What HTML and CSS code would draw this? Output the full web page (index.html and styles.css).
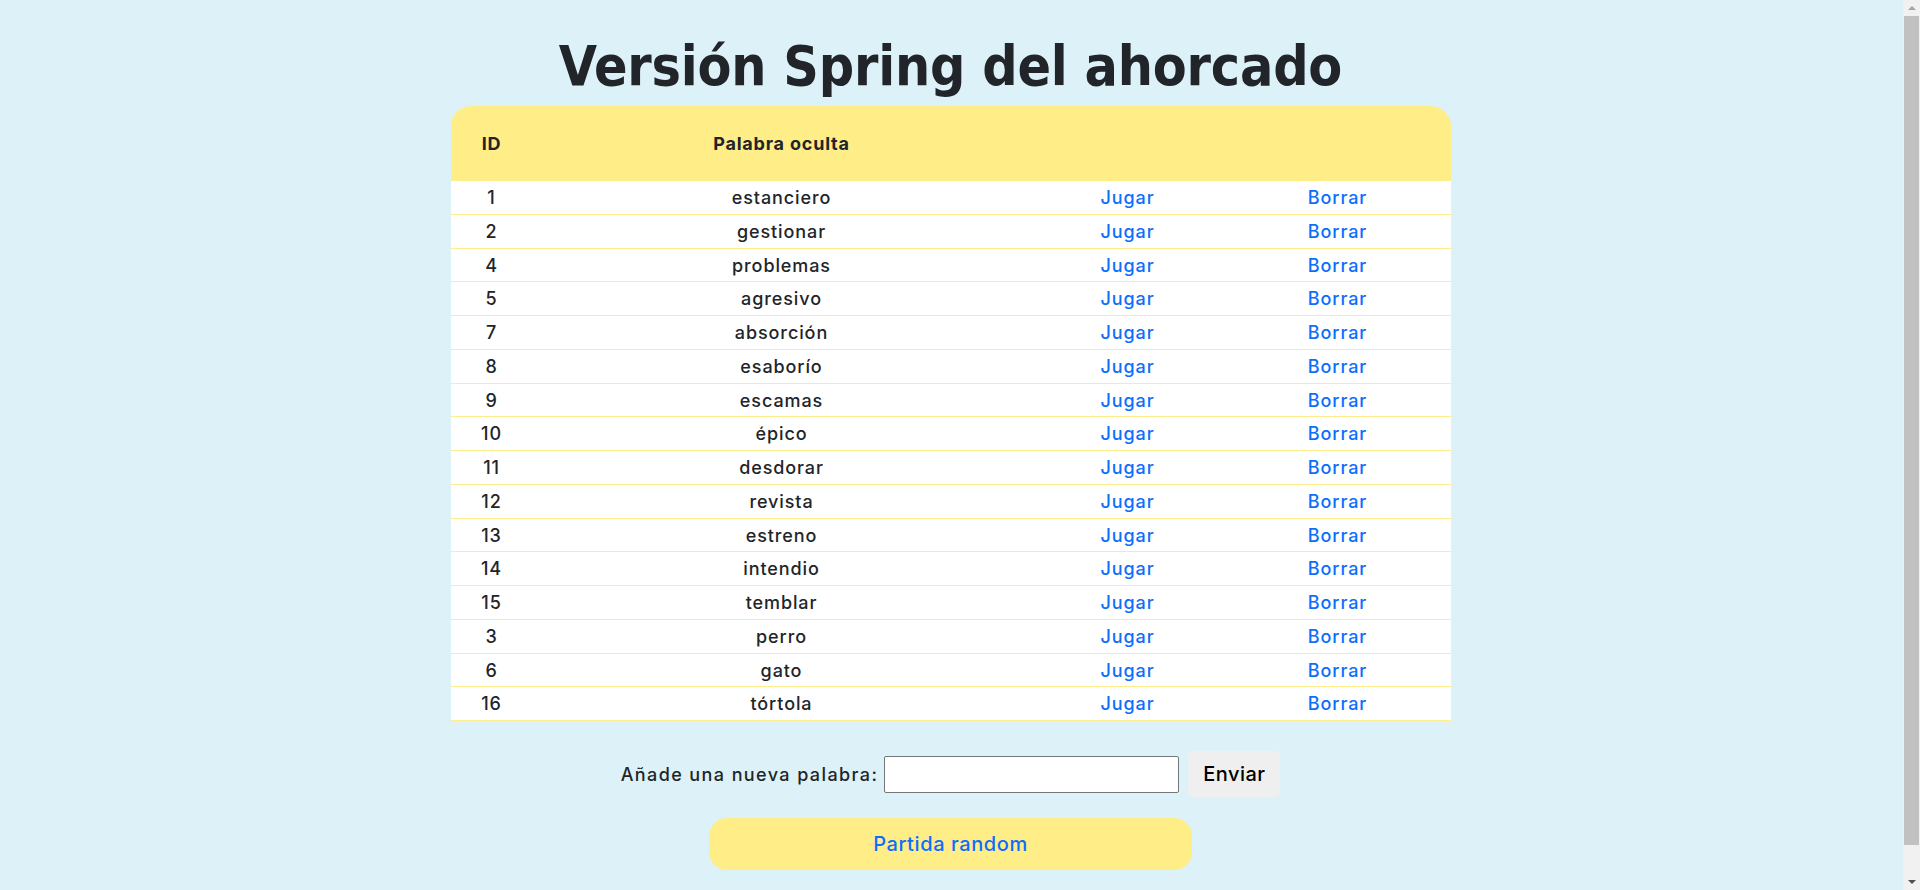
FILE: index.html
```html
<!DOCTYPE html>
<html lang="es">
<head>
<meta charset="utf-8">
<title>Ahorcado</title>
<link rel="stylesheet" href="styles.css">
</head>
<body>
<main class="page">
  <h1 class="title">Versión Spring del ahorcado</h1>
  <table class="words">
    <colgroup>
      <col class="c-id"><col class="c-word"><col class="c-play"><col class="c-del">
    </colgroup>
    <thead>
      <tr><th>ID</th><th>Palabra oculta</th><th></th><th></th></tr>
    </thead>
    <tbody>
      <tr><td>1</td><td>estanciero</td><td><a href="#">Jugar</a></td><td><a href="#">Borrar</a></td></tr>
      <tr><td>2</td><td>gestionar</td><td><a href="#">Jugar</a></td><td><a href="#">Borrar</a></td></tr>
      <tr><td>4</td><td>problemas</td><td><a href="#">Jugar</a></td><td><a href="#">Borrar</a></td></tr>
      <tr><td>5</td><td>agresivo</td><td><a href="#">Jugar</a></td><td><a href="#">Borrar</a></td></tr>
      <tr><td>7</td><td>absorción</td><td><a href="#">Jugar</a></td><td><a href="#">Borrar</a></td></tr>
      <tr><td>8</td><td>esaborío</td><td><a href="#">Jugar</a></td><td><a href="#">Borrar</a></td></tr>
      <tr><td>9</td><td>escamas</td><td><a href="#">Jugar</a></td><td><a href="#">Borrar</a></td></tr>
      <tr><td>10</td><td>épico</td><td><a href="#">Jugar</a></td><td><a href="#">Borrar</a></td></tr>
      <tr><td>11</td><td>desdorar</td><td><a href="#">Jugar</a></td><td><a href="#">Borrar</a></td></tr>
      <tr><td>12</td><td>revista</td><td><a href="#">Jugar</a></td><td><a href="#">Borrar</a></td></tr>
      <tr><td>13</td><td>estreno</td><td><a href="#">Jugar</a></td><td><a href="#">Borrar</a></td></tr>
      <tr><td>14</td><td>intendio</td><td><a href="#">Jugar</a></td><td><a href="#">Borrar</a></td></tr>
      <tr><td>15</td><td>temblar</td><td><a href="#">Jugar</a></td><td><a href="#">Borrar</a></td></tr>
      <tr><td>3</td><td>perro</td><td><a href="#">Jugar</a></td><td><a href="#">Borrar</a></td></tr>
      <tr><td>6</td><td>gato</td><td><a href="#">Jugar</a></td><td><a href="#">Borrar</a></td></tr>
      <tr><td>16</td><td>tórtola</td><td><a href="#">Jugar</a></td><td><a href="#">Borrar</a></td></tr>
    </tbody>
  </table>
  <form class="add-form" action="#">
    <label class="add-label" for="palabra">Añade una nueva palabra:</label>
    <input class="add-input" id="palabra" type="text">
    <button class="add-btn" type="button">Enviar</button>
  </form>
  <a class="random-btn" href="#">Partida random</a>
</main>
<div class="scrollbar" aria-hidden="true">
  <div class="sb-arrow sb-up"></div>
  <div class="sb-thumb"></div>
  <div class="sb-arrow sb-down"></div>
</div>
</body>
</html>
```
FILE: styles.css
```css
html, body {
  margin: 0;
  padding: 0;
}
body {
  background: #ddf2f8;
  color: #212529;
  font-family: Inter, "Noto Sans", sans-serif;
  font-weight: 500;
  font-size: 18px;
  letter-spacing: 0.9px;
  padding-right: 19px;
}
.page {
  display: flex;
  flex-direction: column;
  align-items: center;
  padding: 32px 0 47px;
}
.title {
  margin: 0 0 6px;
  font-family: "DejaVu Sans Condensed", "DejaVu Sans", sans-serif;
  font-weight: 700;
  font-size: 55px;
  line-height: 68px;
  letter-spacing: -0.2px;
  color: #212529;
}
.words {
  width: 1000px;
  border-collapse: separate;
  border-spacing: 0;
  table-layout: fixed;
}
.c-id { width: 82px; }
.c-word { width: 498px; }
.c-play { width: 194px; }
.c-del { width: 226px; }
.words th {
  background: #ffed88;
  height: 75px;
  padding: 0;
  font-weight: 700;
  font-size: 18px;
  letter-spacing: 0.8px;
  text-align: center;
}
.words th:first-child { border-top-left-radius: 20px; }
.words th:last-child { border-top-right-radius: 20px; }
.words td {
  background: #fff;
  padding: 2px 0 0;
  line-height: 30.75px;
  border-bottom: 1px solid #ffec8a;
  text-align: center;
}
.words a {
  color: #0d6efd;
  text-decoration: none;
}
.add-form {
  display: flex;
  align-items: center;
  margin-top: 30px;
}
.add-label {
  margin-right: 6px;
  letter-spacing: 1.4px;
}
.add-input {
  width: 295px;
  height: 37px;
  box-sizing: border-box;
  border: 1px solid #767676;
  border-radius: 2px;
  margin: 0 9px 0 0;
  font: inherit;
}
.add-btn {
  width: 92px;
  height: 46px;
  border: none;
  border-radius: 6px;
  background: #efefef;
  color: #000;
  font-family: inherit;
  font-weight: 500;
  font-size: 20px;
  letter-spacing: 0.5px;
  padding: 0;
}
.random-btn {
  margin-top: 21px;
  width: 483px;
  height: 52px;
  display: flex;
  align-items: center;
  justify-content: center;
  background: #ffed88;
  border-radius: 18px;
  color: #0d6efd;
  font-size: 20px;
  letter-spacing: 0.6px;
  text-decoration: none;
}
.scrollbar {
  position: fixed;
  top: 0;
  right: 0;
  width: 17px;
  height: 100vh;
  background: #f1f1f1;
  display: flex;
  flex-direction: column;
  align-items: center;
}
.sb-arrow {
  width: 0;
  height: 0;
  border-left: 4px solid transparent;
  border-right: 4px solid transparent;
}
.sb-up {
  margin: 6px 0 6px;
  border-bottom: 4px solid #a3a3a3;
}
.sb-thumb {
  width: 15px;
  height: 829px;
  background: #c1c1c1;
}
.sb-down {
  margin-top: auto;
  margin-bottom: 6px;
  border-top: 4px solid #505050;
}
```
